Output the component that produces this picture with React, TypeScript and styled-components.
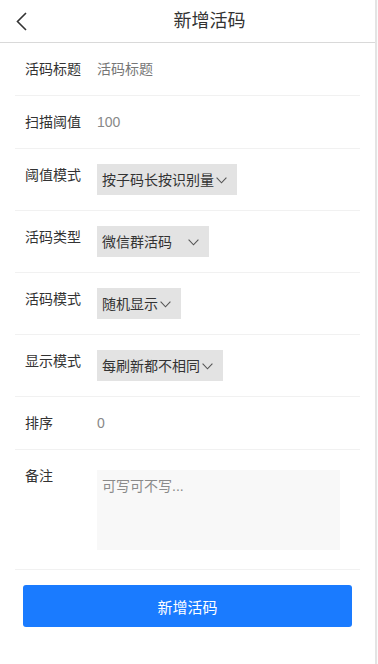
import React from "react";
import styled, { createGlobalStyle } from "styled-components";

const Global = createGlobalStyle`
  html, body { margin: 0; padding: 0; background: #fbfbfb; }
  body { font-family: "Liberation Sans", "Noto Sans CJK SC", sans-serif; color: #333; }
  * { box-sizing: border-box; }
`;

const Page = styled.div`
  width: 377px;
  min-height: 664px;
  background: #fff;
  border-right: 2px solid #e4e4e4;
`;

const Header = styled.header`
  display: flex;
  align-items: center;
  height: 43px;
  border-bottom: 1px solid #d9d9d9;
`;

const Back = styled.button`
  width: 44px;
  height: 42px;
  border: none;
  background: none;
  padding: 0 0 0 16px;
  display: flex;
  align-items: center;
  cursor: pointer;
`;

const Title = styled.h1`
  flex: 1;
  margin: 0;
  text-align: center;
  font-size: 18px;
  font-weight: 400;
  line-height: 42px;
  color: #333;
`;

const Form = styled.div`
  padding: 0 15px;
`;

const Row = styled.div`
  display: flex;
  align-items: flex-start;
  padding-left: 10px;
  border-bottom: 1px solid #f1f1f1;
`;

const Label = styled.div`
  width: 72px;
  flex: none;
  padding: 16px 0;
  font-size: 14px;
  line-height: 20px;
  color: #333;
`;

const Field = styled.div<{ $pad: string }>`
  flex: 1;
  padding: ${(p) => p.$pad};
  font-size: 14px;
  line-height: 20px;
`;

const Value = styled.span<{ $muted?: boolean }>`
  color: ${(p) => (p.$muted ? "#777" : "#888")};
`;

const Select = styled.div<{ $width?: number }>`
  display: inline-flex;
  align-items: center;
  justify-content: space-between;
  gap: 2px;
  height: 31px;
  padding: 1px 10px 0 5px;
  background: #e3e3e3;
  font-size: 14px;
  color: #333;
  width: ${(p) => (p.$width ? `${p.$width}px` : "auto")};
`;

const TextArea = styled.textarea`
  display: block;
  width: 243px;
  height: 80px;
  border: none;
  outline: none;
  resize: none;
  background: #f8f8f8;
  padding: 6px 5px;
  font-family: "Liberation Sans", "Noto Sans CJK SC", sans-serif;
  font-size: 14px;
  line-height: 20px;
  color: #333;
  &::placeholder { color: #8a8a8a; }
`;

const Submit = styled.button`
  display: block;
  width: calc(100% - 16px);
  margin: 15px 8px 0;
  height: 42px;
  border: none;
  border-radius: 3px;
  background: #1a7bff;
  color: #fff;
  font-family: "Liberation Sans", "Noto Sans CJK SC", sans-serif;
  font-size: 15px;
  cursor: pointer;
`;

const Chevron = () => (
  <svg width="11" height="7" viewBox="0 0 11 7" fill="none">
    <path d="M0.6 0.6 L5.5 5.8 L10.4 0.6" stroke="#555" strokeWidth="1.1" />
  </svg>
);

const BackIcon = () => (
  <svg width="11" height="19" viewBox="0 0 11 19" fill="none">
    <path d="M10 1 L1.5 9.5 L10 18" stroke="#333" strokeWidth="1.6" />
  </svg>
);

const selects = [
  { label: "阈值模式", value: "按子码长按识别量" },
  { label: "活码类型", value: "微信群活码", width: 112 },
  { label: "活码模式", value: "随机显示" },
  { label: "显示模式", value: "每刷新都不相同" },
];

export default function App() {
  return (
    <>
      <Global />
      <Page>
        <Header>
          <Back aria-label="返回">
            <BackIcon />
          </Back>
          <Title>新增活码</Title>
        </Header>
        <Form>
          <Row>
            <Label>活码标题</Label>
            <Field $pad="16px 0">
              <Value $muted>活码标题</Value>
            </Field>
          </Row>
          <Row>
            <Label>扫描阈值</Label>
            <Field $pad="16px 0">
              <Value>100</Value>
            </Field>
          </Row>
          {selects.map((s) => (
            <Row key={s.label}>
              <Label>{s.label}</Label>
              <Field $pad="15px 0">
                <Select $width={s.width}>
                  <span>{s.value}</span>
                  <Chevron />
                </Select>
              </Field>
            </Row>
          ))}
          <Row>
            <Label>排序</Label>
            <Field $pad="16px 0">
              <Value>0</Value>
            </Field>
          </Row>
          <Row>
            <Label>备注</Label>
            <Field $pad="20px 0 19px">
              <TextArea placeholder="可写可不写..." />
            </Field>
          </Row>
          <Submit>新增活码</Submit>
        </Form>
      </Page>
    </>
  );
}
